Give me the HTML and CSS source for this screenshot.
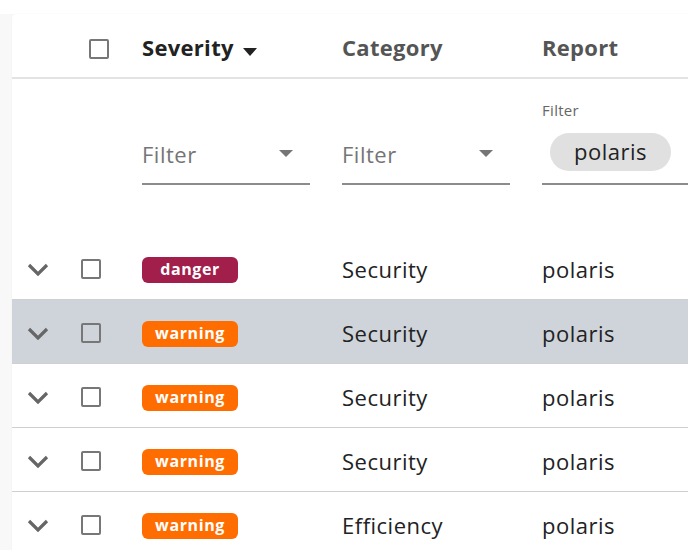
FILE: index.html
```html
<!DOCTYPE html>
<html>
<head>
<meta charset="utf-8">
<link rel="stylesheet" href="styles.css">
</head>
<body>
<div class="page">
  <div class="card">
    <div class="row head">
      <div class="cell c-exp"></div>
      <div class="cell c-chk"><span class="box head-box"></span></div>
      <div class="cell c-sev"><span class="htext dark">Severity</span><svg class="sort" width="14" height="8" viewBox="0 0 14 8"><path d="M0 0 H14 L7 8 Z" fill="#222"/></svg></div>
      <div class="cell c-cat"><span class="htext">Category</span></div>
      <div class="cell c-rep"><span class="htext">Report</span></div>
    </div>
    <div class="row filters">
      <div class="cell c-exp"></div>
      <div class="cell c-chk"></div>
      <div class="cell c-sev"><div class="select"><span class="ph">Filter</span><svg width="14" height="7" viewBox="0 0 14 7"><path d="M0 0 H14 L7 7 Z" fill="#757575"/></svg></div></div>
      <div class="cell c-cat"><div class="select"><span class="ph">Filter</span><svg width="14" height="7" viewBox="0 0 14 7"><path d="M0 0 H14 L7 7 Z" fill="#757575"/></svg></div></div>
      <div class="cell c-rep"><div class="chipfield"><span class="flabel">Filter</span><span class="chip">polaris</span></div></div>
    </div>

    <div class="row item">
      <div class="cell c-exp"><svg class="chev" width="22" height="13" viewBox="0 0 22 13"><path d="M2 2 L11 11 L20 2" fill="none" stroke="#666" stroke-width="3.2"/></svg></div>
      <div class="cell c-chk"><span class="box"></span></div>
      <div class="cell c-sev"><span class="badge danger">danger</span></div>
      <div class="cell c-cat">Security</div>
      <div class="cell c-rep">polaris</div>
    </div>
    <div class="row item hl">
      <div class="cell c-exp"><svg class="chev" width="22" height="13" viewBox="0 0 22 13"><path d="M2 2 L11 11 L20 2" fill="none" stroke="#666" stroke-width="3.2"/></svg></div>
      <div class="cell c-chk"><span class="box"></span></div>
      <div class="cell c-sev"><span class="badge warning">warning</span></div>
      <div class="cell c-cat">Security</div>
      <div class="cell c-rep">polaris</div>
    </div>
    <div class="row item">
      <div class="cell c-exp"><svg class="chev" width="22" height="13" viewBox="0 0 22 13"><path d="M2 2 L11 11 L20 2" fill="none" stroke="#666" stroke-width="3.2"/></svg></div>
      <div class="cell c-chk"><span class="box"></span></div>
      <div class="cell c-sev"><span class="badge warning">warning</span></div>
      <div class="cell c-cat">Security</div>
      <div class="cell c-rep">polaris</div>
    </div>
    <div class="row item">
      <div class="cell c-exp"><svg class="chev" width="22" height="13" viewBox="0 0 22 13"><path d="M2 2 L11 11 L20 2" fill="none" stroke="#666" stroke-width="3.2"/></svg></div>
      <div class="cell c-chk"><span class="box"></span></div>
      <div class="cell c-sev"><span class="badge warning">warning</span></div>
      <div class="cell c-cat">Security</div>
      <div class="cell c-rep">polaris</div>
    </div>
    <div class="row item">
      <div class="cell c-exp"><svg class="chev" width="22" height="13" viewBox="0 0 22 13"><path d="M2 2 L11 11 L20 2" fill="none" stroke="#666" stroke-width="3.2"/></svg></div>
      <div class="cell c-chk"><span class="box"></span></div>
      <div class="cell c-sev"><span class="badge warning">warning</span></div>
      <div class="cell c-cat">Efficiency</div>
      <div class="cell c-rep">polaris</div>
    </div>
  </div>
</div>
</body>
</html>
```
FILE: styles.css
```css
* { box-sizing: border-box; }
html, body { margin: 0; padding: 0; }
body {
  background: #fafafa;
  font-family: "Open Sans", Lato, sans-serif;
  color: #222;
  overflow: hidden;
}
.page {
  width: 688px;
  height: 550px;
  padding: 14px 0 0 12px;
  background: linear-gradient(#fff, #fff) top / 100% 14px no-repeat, #f8f8f8;
  overflow: hidden;
}
.card {
  background: #fff;
  border-radius: 4px 0 0 0;
  box-shadow: 0 0 2px rgba(0,0,0,0.06);
  height: 536px;
  overflow: hidden;
}
.row {
  display: grid;
  grid-template-columns: 54px 76px 200px 200px 1fr;
  align-items: center;
}
.cell { display: flex; align-items: center; white-space: nowrap; font-size: 22px; letter-spacing: 0.5px; }
.head {
  height: 65px;
  border-bottom: 2px solid #e3e3e3;
}
.htext { font-weight: 700; font-size: 22px; letter-spacing: 0.3px; color: #555; padding-top: 3px; }
.htext.dark { color: #222; }
.sort { margin-left: 9px; margin-top: 12px; }
.box {
  display: block;
  width: 20px;
  height: 20px;
  border: 2px solid #777;
  border-radius: 2px;
}
.head .c-chk { padding-left: 23px; padding-top: 6px; }
.filters { height: 157px; align-items: start; }
.select {
  width: 168px;
  height: 106px;
  display: flex;
  align-items: center;
  justify-content: space-between;
  padding: 45px 17px 0 0;
  border-bottom: 2px solid #8c8c8c;
}
.ph { color: #757575; font-size: 22px; }
.chipfield {
  width: 160px;
  height: 106px;
  border-bottom: 2px solid #8c8c8c;
  display: flex;
  flex-direction: column;
  align-items: flex-start;
  padding-top: 21px;
}
.flabel { font-size: 15px; color: #666; line-height: 20px; letter-spacing: 0.3px; }
.chip {
  margin-top: 13px;
  margin-left: 8px;
  background: #e0e0e0;
  border-radius: 19px;
  height: 38px;
  line-height: 37px;
  padding: 0 24px;
  font-size: 22px;
  color: #222;
}
.item {
  height: 64px;
  border-bottom: 1px solid #cfcfcf;
}
.item .cell { padding-top: 3px; }
.item.hl { background: #cfd4db; }
.c-exp { padding-left: 15px; }
.item .c-chk { padding-left: 15px; }
.item .c-exp, .item .c-chk { padding-top: 2px; }
.chev { display: block; margin-top: 2px; }
.badge {
  display: inline-block;
  width: 96px;
  height: 26px;
  line-height: 25px;
  border-radius: 6px;
  text-align: center;
  color: #fff;
  font-weight: 700;
  font-size: 16px;
  letter-spacing: 0.6px;
  margin-top: 1px;
}
.danger { background: #a21e4b; }
.warning { background: #ff6d00; }
```
